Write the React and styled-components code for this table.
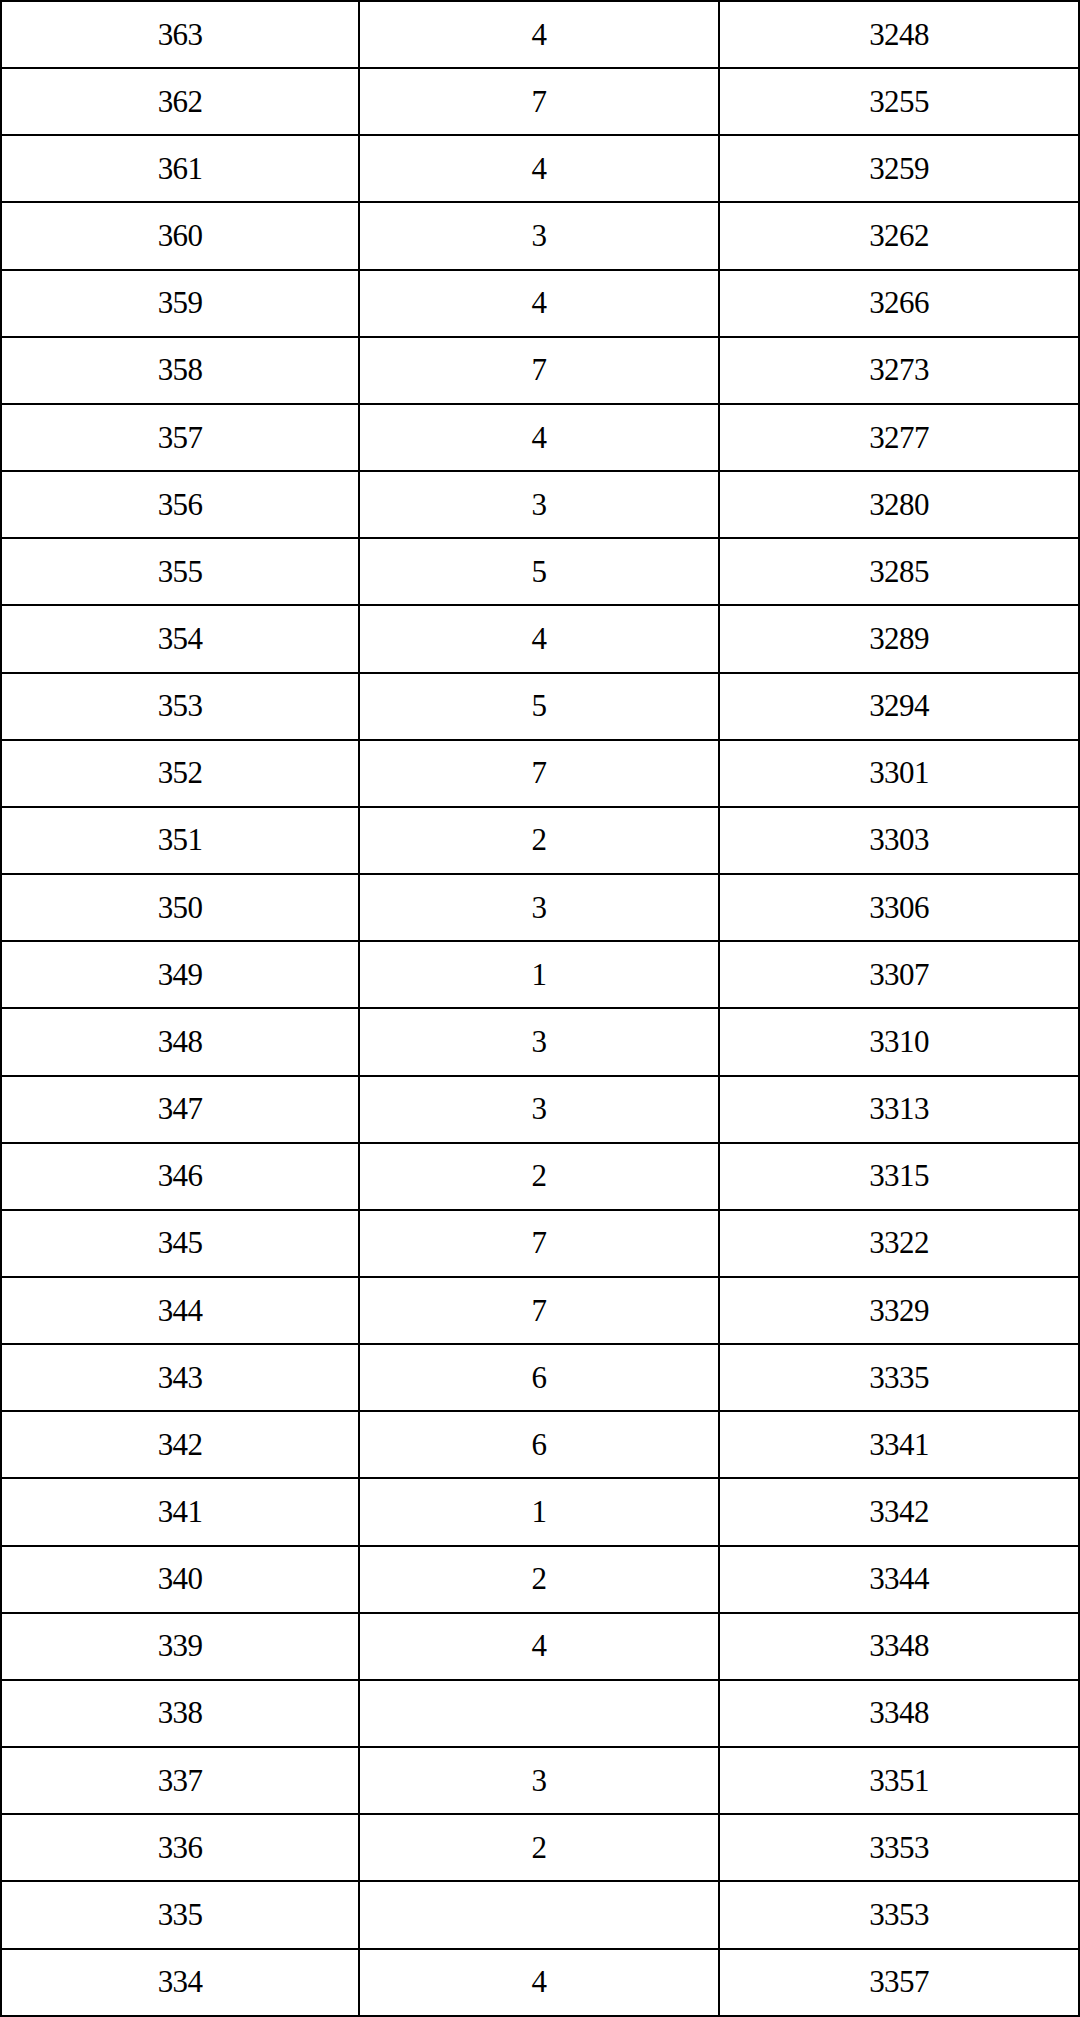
import React from "react";
import styled, { createGlobalStyle } from "styled-components";

const rows = [
  ["363", "4", "3248"],
  ["362", "7", "3255"],
  ["361", "4", "3259"],
  ["360", "3", "3262"],
  ["359", "4", "3266"],
  ["358", "7", "3273"],
  ["357", "4", "3277"],
  ["356", "3", "3280"],
  ["355", "5", "3285"],
  ["354", "4", "3289"],
  ["353", "5", "3294"],
  ["352", "7", "3301"],
  ["351", "2", "3303"],
  ["350", "3", "3306"],
  ["349", "1", "3307"],
  ["348", "3", "3310"],
  ["347", "3", "3313"],
  ["346", "2", "3315"],
  ["345", "7", "3322"],
  ["344", "7", "3329"],
  ["343", "6", "3335"],
  ["342", "6", "3341"],
  ["341", "1", "3342"],
  ["340", "2", "3344"],
  ["339", "4", "3348"],
  ["338", "", "3348"],
  ["337", "3", "3351"],
  ["336", "2", "3353"],
  ["335", "", "3353"],
  ["334", "4", "3357"],
];

const GlobalStyle = createGlobalStyle`
  html, body {
    margin: 0;
    padding: 0;
    background: #ffffff;
  }
`;

const Grid = styled.div`
  display: grid;
  grid-template-columns: 358px 360px 360px;
  grid-auto-rows: 67.17px;
  width: 1080px;
  box-sizing: border-box;
  border-top: 2px solid #000;
  border-left: 2px solid #000;
  font-family: "Liberation Serif", "DejaVu Serif", serif;
  font-size: 31px;
  color: #000;
`;

const Cell = styled.div`
  display: flex;
  align-items: center;
  justify-content: center;
  box-sizing: border-box;
  border-right: 2px solid #000;
  border-bottom: 2px solid #000;
  letter-spacing: -0.6px;
`;

const App = () => {
  return (
    <React.Fragment>
      <GlobalStyle />
      <Grid>
        {rows.map((row, i) =>
          row.map((value, j) => <Cell key={i + "-" + j}>{value}</Cell>)
        )}
      </Grid>
    </React.Fragment>
  );
};

export default App;
